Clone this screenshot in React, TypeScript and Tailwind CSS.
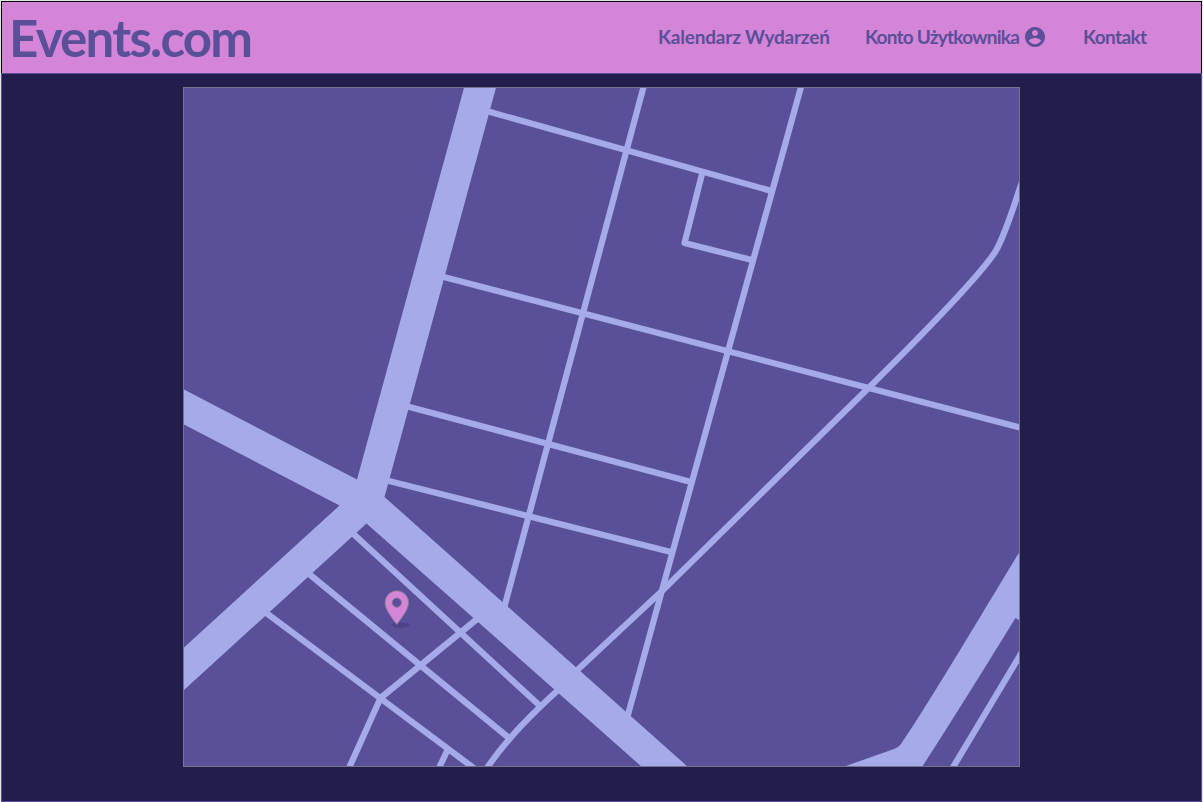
import React from "react";

const ROADS = [
  "M484 110.300 L771.500 191",
  "M438 275.500 L1022 428",
  "M402 405 L691 482",
  "M382 479.300 L671 552",
  "M644.300 84 L503 612",
  "M801.800 84 L664 583 L626 722",
  "M702.500 172 L684.500 243 L752 260",
  "M1022 182 C1014 205 1006 233 995.500 251.500 C978 278 918 339 869.500 387 L663 590 L572 675",
  "M563 685.500 C535 711 508 737 487 768",
  "M347 528 L539 705",
  "M303 569 L509 738",
  "M261 609 L475 769",
  "M482 615 L380.500 698 L349 768",
  "M448 749 L439 768",
  "M1022 652 L952 769",
];

function CityMap() {
  return (
    <svg viewBox="184 88 835 678" className="block h-full w-full" aria-hidden="true">
      <g fill="#a4abe8">
        <path d="M464.500 86 L496.500 86 L384.500 497 L688 767 L642 767 L366.500 523.500 L183 691 L183 648.500 L339.500 505.500 L183 424 L183 389 L357 479.500 Z" />
        <path d="M1020 551 L1020 620.500 L1015.500 618 Q957 713 922 767 L843 767 L894 749 Q899 747 901 744 C921 716 980 617 1020 551 Z" />
      </g>
      <g fill="none" stroke="#a4abe8" strokeWidth="6.200" strokeLinejoin="round">
        {ROADS.map((d) => (
          <path key={d} d={d} />
        ))}
      </g>
      <ellipse cx="401" cy="625.200" rx="9" ry="2.700" fill="#4d4284" />
      <path
        fillRule="evenodd"
        d="M396.800 624.500 C391.500 617.500 385 609.500 385 602.500 A11.800 11.800 0 0 1 408.600 602.500 C408.600 609.500 402 617.500 396.800 624.500 Z M396.800 598 a4.600 4.600 0 1 0 0 9.200 a4.600 4.600 0 1 0 0 -9.200 Z"
        fill="#d585d8"
        stroke="#827888"
        strokeWidth="0.900"
      />
    </svg>
  );
}

export default function App() {
  return (
    <div className="flex h-[802px] w-[1203px] flex-col bg-[#e6e6e6] px-px pt-px font-[Lato,sans-serif] font-bold text-[#5a4f99]">
      <header className="flex h-[72px] shrink-0 items-center border border-b-0 border-black bg-[#d585d8]">
        <div className="ml-[7px] w-[649px] shrink-0 text-[51px] leading-none tracking-[-1.75px]">Events.com</div>
        <nav className="flex items-center pb-px text-[19px] leading-6">
          <a className="w-[207px] whitespace-nowrap tracking-[-0.2px]">Kalendarz Wydarzeń</a>
          <a className="flex w-[218px] items-center whitespace-nowrap">
            <span className="w-[158px] tracking-[-0.76px]">Konto Użytkownika</span>
            <svg viewBox="0 0 24 24" className="size-6 shrink-0" fill="currentColor">
              <path d="M12 2C6.480 2 2 6.480 2 12s4.480 10 10 10 10-4.480 10-10S17.520 2 12 2zm0 3c1.660 0 3 1.340 3 3s-1.340 3-3 3-3-1.340-3-3 1.340-3 3-3zm0 14.200c-2.500 0-4.710-1.280-6-3.220.030-1.990 4-3.080 6-3.080 1.990 0 5.970 1.090 6 3.080-1.290 1.940-3.500 3.220-6 3.220z" />
            </svg>
          </a>
          <a className="tracking-[-0.6px]">Kontakt</a>
        </nav>
      </header>
      <main className="flex flex-1 items-start border border-[#5a4f99] bg-[#211e4d] pl-[181px] pt-[13px]">
        <div className="h-[680px] w-[837px] border border-[#77728e] bg-[#5a4f99]">
          <CityMap />
        </div>
      </main>
    </div>
  );
}
